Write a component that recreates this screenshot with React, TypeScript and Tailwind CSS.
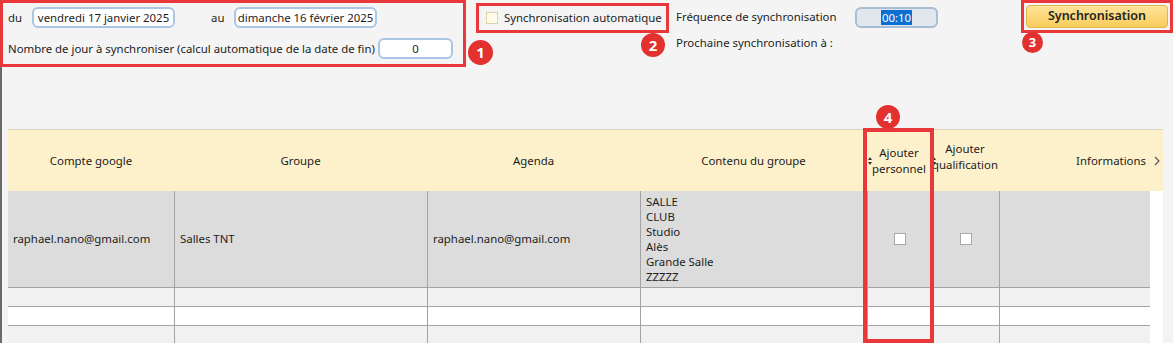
import React from 'react';

const cols = [166, 253, 213, 227, 64, 68, 151];
const headers = ['Compte google', 'Groupe', 'Agenda', 'Contenu du groupe'];
const groupItems = ['SALLE', 'CLUB', 'Studio', 'Alès', 'Grande Salle', 'ZZZZZ'];

const Field: React.FC<{ value: string; className?: string }> = ({ value, className = '' }) => (
  <div
    className={`h-[21px] shrink-0 rounded-[6px] border-2 border-[#a9c7e4] bg-white flex items-center justify-center whitespace-nowrap ${className}`}
  >
    {value}
  </div>
);

const Badge: React.FC<{ n: number; className: string }> = ({ n, className }) => (
  <div
    className={`absolute rounded-full bg-[#e2312f] text-white font-bold flex items-center justify-center ${className}`}
  >
    {n}
  </div>
);

const SortMark = () => (
  <svg width="4" height="8" viewBox="0 0 4 8" className="absolute left-[1px] top-[27px]">
    <path d="M0 3 L2 0 L4 3 Z" fill="#333" />
    <path d="M0 5 L2 8 L4 5 Z" fill="#333" />
  </svg>
);

const Box = () => <div className="w-[12px] h-[12px] shrink-0 bg-white border border-[#a8a8a8]" />;

export default function App() {
  return (
    <div className="w-[1173px] h-[343px] bg-[#f4f4f4] relative overflow-hidden text-[11.4px] text-[#1c1c1c] font-['Noto_Sans',sans-serif] leading-none">
      {/* top bar */}
      <div className="flex items-start h-[67px]">
        <div className="w-[466px] h-[67px] shrink-0 border-[3px] border-[#e8383b] pl-[5px] pt-[4px] flex flex-col gap-[10px]">
          <div className="flex items-center h-[21px]">
            <span className="w-[24px] shrink-0">du</span>
            <Field value="vendredi 17 janvier 2025" className="w-[143px]" />
            <span className="ml-[36px] w-[23px] shrink-0">au</span>
            <Field value="dimanche 16 février 2025" className="w-[143px]" />
          </div>
          <div className="flex items-center h-[21px]">
            <span className="w-[370px] shrink-0 whitespace-nowrap">
              Nombre de jour à synchroniser (calcul automatique de la date de fin)
            </span>
            <Field value="0" className="w-[75px]" />
          </div>
        </div>

        <div className="ml-[10px] mt-[3px] w-[193px] h-[30px] shrink-0 border-[3px] border-[#e8383b] flex items-center pl-[7px]">
          <div className="w-[12px] h-[12px] shrink-0 bg-[#fffbe8] border border-[#ddd3a8]" />
          <span className="ml-[6px] whitespace-nowrap">Synchronisation automatique</span>
        </div>

        <div className="ml-[7px] w-[179px] shrink-0 flex flex-col gap-[6px] pt-[7px]">
          <div className="h-[20px] flex items-center whitespace-nowrap">Fréquence de synchronisation</div>
          <div className="h-[20px] flex items-center whitespace-nowrap">Prochaine synchronisation à :</div>
        </div>

        <div className="mt-[7px] w-[83px] h-[21px] shrink-0 rounded-[6px] border-2 border-[#a6bdd6] bg-[#e2e7ee] flex items-center justify-center">
          <span className="bg-[#0a6fd0] text-white px-[1px] py-[2px]">00:10</span>
        </div>

        <div className="ml-[83px] w-[152px] h-[33px] shrink-0 border-[3px] border-[#e8383b] p-[2px]">
          <button className="w-full h-full rounded-[4px] border border-[#e0b54e] bg-gradient-to-b from-[#fde49a] to-[#f9cc58] text-[12.5px] font-semibold text-[#222]">
            Synchronisation
          </button>
        </div>
      </div>

      {/* content */}
      <div className="flex items-start">
        <div className="w-[2px] h-[276px] shrink-0 bg-[#6a6a6a]" />
        <div className="ml-[6px] mt-[62px] flex flex-col shrink-0">
          {/* header */}
          <div className="flex h-[62px] shrink-0 bg-[#fdf1cc] border-t border-[#d9d2bf] w-[1155px]">
            {headers.map((h, i) => (
              <div key={h} style={{ width: cols[i] }} className="shrink-0 flex items-center justify-center">
                {h}
              </div>
            ))}
            <div className="relative w-[64px] shrink-0 flex flex-col items-center justify-center leading-[16px] overflow-hidden">
              <SortMark />
              <span>Ajouter</span>
              <span className="whitespace-nowrap">personnel</span>
            </div>
            <div className="relative w-[68px] shrink-0 flex flex-col items-center justify-center leading-[16px] overflow-hidden">
              <SortMark />
              <span className="mt-[-8px]">Ajouter</span>
              <span className="whitespace-nowrap">qualification</span>
            </div>
            <div className="w-[164px] shrink-0 flex items-center justify-end pr-[3px] gap-[8px]">
              <span>Informations</span>
              <svg width="6" height="10" viewBox="0 0 6 10">
                <path d="M1 1 L5 5 L1 9" fill="none" stroke="#555" strokeWidth="1.1" />
              </svg>
            </div>
          </div>

          {/* rows */}
          <div className="flex shrink-0">
            <div className="flex flex-col w-[1142px] shrink-0">
              <div className="flex h-[97px] shrink-0 bg-[#dcdcdc] border-b border-[#a3a3a3]">
                <div style={{ width: cols[0] }} className="shrink-0 flex items-center pl-[5px]">raphael.nano@gmail.com</div>
                <div style={{ width: cols[1] }} className="shrink-0 flex items-center pl-[5px] border-l border-[#a3a3a3]">Salles TNT</div>
                <div style={{ width: cols[2] }} className="shrink-0 flex items-center pl-[5px] border-l border-[#a3a3a3]">raphael.nano@gmail.com</div>
                <div style={{ width: cols[3] }} className="shrink-0 flex flex-col justify-center pl-[5px] border-l border-[#a3a3a3] leading-[15px]">
                  {groupItems.map((g) => (
                    <span key={g}>{g}</span>
                  ))}
                </div>
                <div style={{ width: cols[4] }} className="shrink-0 flex items-center justify-center border-l border-[#a3a3a3]"><Box /></div>
                <div style={{ width: cols[5] }} className="shrink-0 flex items-center justify-center border-l border-[#a3a3a3]"><Box /></div>
                <div style={{ width: cols[6] }} className="shrink-0 border-l border-[#a3a3a3]" />
              </div>
              {['bg-[#f1f1f1]', 'bg-white', 'bg-[#f1f1f1]'].map((bg, r) => (
                <div key={r} className={`flex h-[19px] shrink-0 border-b border-[#a3a3a3] ${bg}`}>
                  {cols.map((w, i) => (
                    <div key={i} style={{ width: w }} className={`shrink-0 ${i > 0 ? 'border-l border-[#a3a3a3]' : ''}`} />
                  ))}
                </div>
              ))}
            </div>
            <div className="w-[13px] h-[160px] shrink-0 bg-white" />
          </div>
        </div>
      </div>

      {/* annotations */}
      <div className="absolute left-[863px] top-[128px] w-[71px] h-[215px] border-4 border-[#e8383b]" />
      <Badge n={1} className="left-[468px] top-[40px] w-[25px] h-[25px] text-[15px]" />
      <Badge n={2} className="left-[641px] top-[33px] w-[24px] h-[24px] text-[15px]" />
      <Badge n={3} className="left-[1022px] top-[32px] w-[21px] h-[21px] text-[13px]" />
      <Badge n={4} className="left-[876px] top-[105px] w-[24px] h-[24px] text-[15px]" />
    </div>
  );
}
